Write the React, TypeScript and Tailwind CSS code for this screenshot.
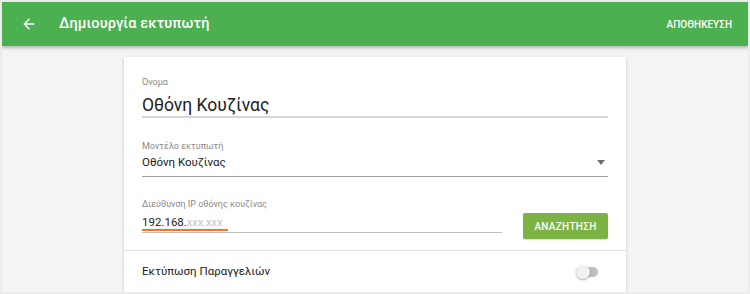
import { ArrowLeft } from 'lucide-react'

function Field({ label, children, className }: { label: string; children: React.ReactNode; className?: string }) {
  return (
    <div className={className}>
      <div className="text-[9px] leading-[12px] text-[#8a8a8a]">{label}</div>
      {children}
    </div>
  )
}

export default function App() {
  return (
    <div className="h-[294px] w-[750px] overflow-hidden bg-[#ececec] p-[2px] font-['Roboto',sans-serif]">
      <div className="flex h-[290px] w-[746px] flex-col overflow-hidden bg-[#f4f4f4]">
        <header className="relative z-10 flex h-[44px] shrink-0 items-center bg-[#4caf50] pl-[19px] pr-[16px] text-white shadow-[0_2px_3px_rgba(0,0,0,0.25)]">
          <ArrowLeft size={16} strokeWidth={2.2} />
          <h1 className="ml-[22px] text-[14.5px] font-medium tracking-[0.1px]">Δημιουργία εκτυπωτή</h1>
          <button className="ml-auto text-[10px] font-medium">ΑΠΟΘΗΚΕΥΣΗ</button>
        </header>

        <main className="flex flex-1 justify-center pt-[11px]">
          <div className="w-[502px] bg-white shadow-[0_1px_3px_rgba(0,0,0,0.2)]">
            <div className="px-[18px] pt-[19px]">
              <Field label="Όνομα">
                <div className="mt-[6px] border-b-2 border-[#d6d6d6] text-[17.5px] leading-[22px] text-[#212121]">
                  Οθόνη Κουζίνας
                </div>
              </Field>

              <Field label="Μοντέλο εκτυπωτή" className="mt-[22px]">
                <div className="mt-[2px] flex items-center justify-between border-b border-[#9e9e9e] pb-[6px] text-[11.5px] leading-[16px] text-[#212121]">
                  <span>Οθόνη Κουζίνας</span>
                  <span className="mr-[3px] h-0 w-0 border-x-[4px] border-t-[5px] border-x-transparent border-t-[#707070]" />
                </div>
              </Field>

              <div className="mt-[21px] flex items-start justify-between pb-[11px]">
                <Field label="Διεύθυνση IP οθόνης κουζίνας" className="w-[360px]">
                  <div className="relative mt-[4px] border-b border-[#bdbdbd] pb-[1px] text-[11.5px] leading-[16px]">
                    <span className="text-[#212121]">192.168.</span>
                    <span className="text-[11px] text-[#c4c4c4]">xxx.xxx</span>
                    <span className="absolute bottom-[1px] left-0 h-[2px] w-[86px] bg-[#f57c00]" />
                  </div>
                </Field>
                <button className="mt-[15px] h-[26px] w-[85px] rounded-[2px] bg-[#7cb342] text-[10px] font-medium tracking-[0.3px] text-white shadow-[0_1px_1px_rgba(0,0,0,0.15)]">
                  ΑΝΑΖΗΤΗΣΗ
                </button>
              </div>
            </div>

            <div className="flex h-[42px] items-center justify-between border-t border-[#e3e3e3] pl-[18px] pr-[26px]">
              <span className="text-[11.5px] text-[#212121]">Εκτύπωση Παραγγελιών</span>
              <div className="relative flex h-[14px] w-[24px] items-center">
                <div className="h-[10px] w-[22px] rounded-full bg-[#bdbdbd]" />
                <div className="absolute left-0 top-0 h-[14px] w-[14px] rounded-full bg-[#f1f1f1] shadow-[0_1px_2px_rgba(0,0,0,0.35)]" />
              </div>
            </div>
          </div>
        </main>
      </div>
    </div>
  )
}
